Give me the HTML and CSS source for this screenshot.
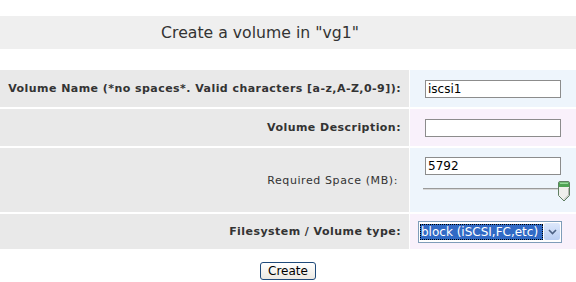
FILE: index.html
```html
<!DOCTYPE html>
<html>
<head>
<meta charset="utf-8">
<link rel="stylesheet" href="styles.css">
</head>
<body>
<h1 class="title">Create a volume in "vg1"</h1>
<form class="form">
  <div class="grid">
    <div class="label bold">Volume Name (*no spaces*. Valid characters [a-z,A-Z,0-9]):</div>
    <div class="value blue"><div class="textbox">iscsi1</div></div>

    <div class="label bold">Volume Description:</div>
    <div class="value pink"><div class="textbox"></div></div>

    <div class="label plain">Required Space (MB):</div>
    <div class="value blue tall">
      <div class="textbox">5792</div>
      <div class="slider">
        <div class="track"></div>
        <svg class="thumb" width="12" height="21" viewBox="0 0 12 21">
          <path d="M0.5 2 Q0.5 0.5 2 0.5 H10 Q11.5 0.5 11.5 2 V14.5 L6 20 L0.5 14.5 Z" fill="#efefec" stroke="#5f7f62" stroke-width="1"/>
          <path d="M1 2 Q1 1 2 1 H10 Q11 1 11 2 V6 H1 Z" fill="#4fa454"/>
          <path d="M2 1.5 H10 V3 H2 Z" fill="#9ad89c"/>
          <path d="M10.5 7 V14 L6 18.5" fill="none" stroke="#b5b5b0" stroke-width="1"/>
        </svg>
      </div>
    </div>

    <div class="label bold">Filesystem / Volume type:</div>
    <div class="value pink">
      <div class="select">
        <span class="sel-text">block (iSCSI,FC,etc)</span>
        <span class="sel-btn">
          <svg width="9" height="6" viewBox="0 0 9 6"><path d="M1 1 L4.5 4.5 L8 1" fill="none" stroke="#4d6185" stroke-width="1.6"/></svg>
        </span>
      </div>
    </div>
  </div>
  <div class="actions"><button type="button" class="btn">Create</button></div>
</form>
</body>
</html>
```
FILE: styles.css
```css
html, body {
  margin: 0;
  padding: 0;
  background: #ffffff;
  font-family: "DejaVu Sans", Verdana, sans-serif;
  color: #333333;
}
.title {
  margin: 16px 0 0 0;
  height: 33px;
  line-height: 33px;
  background: #efefef;
  text-align: center;
  padding-right: 56px;
  font-size: 15.7px;
  font-weight: normal;
  color: #333333;
}
.form {
  margin: 21px 0 0 0;
}
.grid {
  display: grid;
  grid-template-columns: 409px 1fr;
  grid-template-rows: 37px 37px 64px 35px;
  column-gap: 1px;
  row-gap: 2px;
}
.label {
  background: #e9e9e9;
  font-size: 11px;
  padding-right: 8px;
  display: flex;
  align-items: center;
  justify-content: flex-end;
  letter-spacing: 0.45px;
  white-space: nowrap;
}
.bold { font-weight: bold; }
.plain { letter-spacing: 0.6px; padding-right: 11px; }
.value {
  display: flex;
  flex-direction: column;
  justify-content: center;
  padding-left: 15px;
}
.value.tall { justify-content: flex-start; padding-top: 9px; }
.blue { background: #eef5fc; }
.pink { background: #f9f1fb; }
.textbox {
  width: 132px;
  height: 16px;
  border: 1px solid #8c8c8c;
  background: #ffffff;
  font-size: 12px;
  line-height: 16px;
  padding-left: 2px;
  color: #000;
}
.slider {
  position: relative;
  width: 147px;
  height: 21px;
  margin-left: -2px;
  margin-top: 5px;
}
.track {
  position: absolute;
  left: 0;
  right: 8px;
  top: 8px;
  height: 1px;
  background: #9a9a9a;
  border-bottom: 1px solid #d8d8d8;
}
.thumb {
  position: absolute;
  right: 0;
  top: 1px;
}
.select {
  display: flex;
  align-items: center;
  width: 140px;
  height: 18px;
  border: 1px solid #7f9db9;
  background: #ffffff;
  margin-left: -7px;
  padding: 1px;
}
.sel-text {
  flex: 1;
  height: 16px;
  line-height: 16px;
  background: #316ac5;
  color: #ffffff;
  font-size: 12px;
  padding-left: 1px;
  outline: 1px dotted #000;
  outline-offset: -1px;
  white-space: nowrap;
  overflow: hidden;
}
.sel-btn {
  width: 16px;
  height: 17px;
  margin-left: 1px;
  background: linear-gradient(#dde8fb, #b9cdf3);
  border-radius: 2px;
  display: flex;
  align-items: center;
  justify-content: center;
}
.actions {
  text-align: center;
  margin-top: 11px;
  padding-left: 0;
}
.btn {
  font-family: "DejaVu Sans", Verdana, sans-serif;
  font-size: 12px;
  width: 56px;
  height: 18px;
  padding: 0;
  border: 1px solid #1f4a7a;
  border-radius: 3px;
  background: linear-gradient(#ffffff, #ece9e2);
  color: #000;
  line-height: 14px;
}
```
